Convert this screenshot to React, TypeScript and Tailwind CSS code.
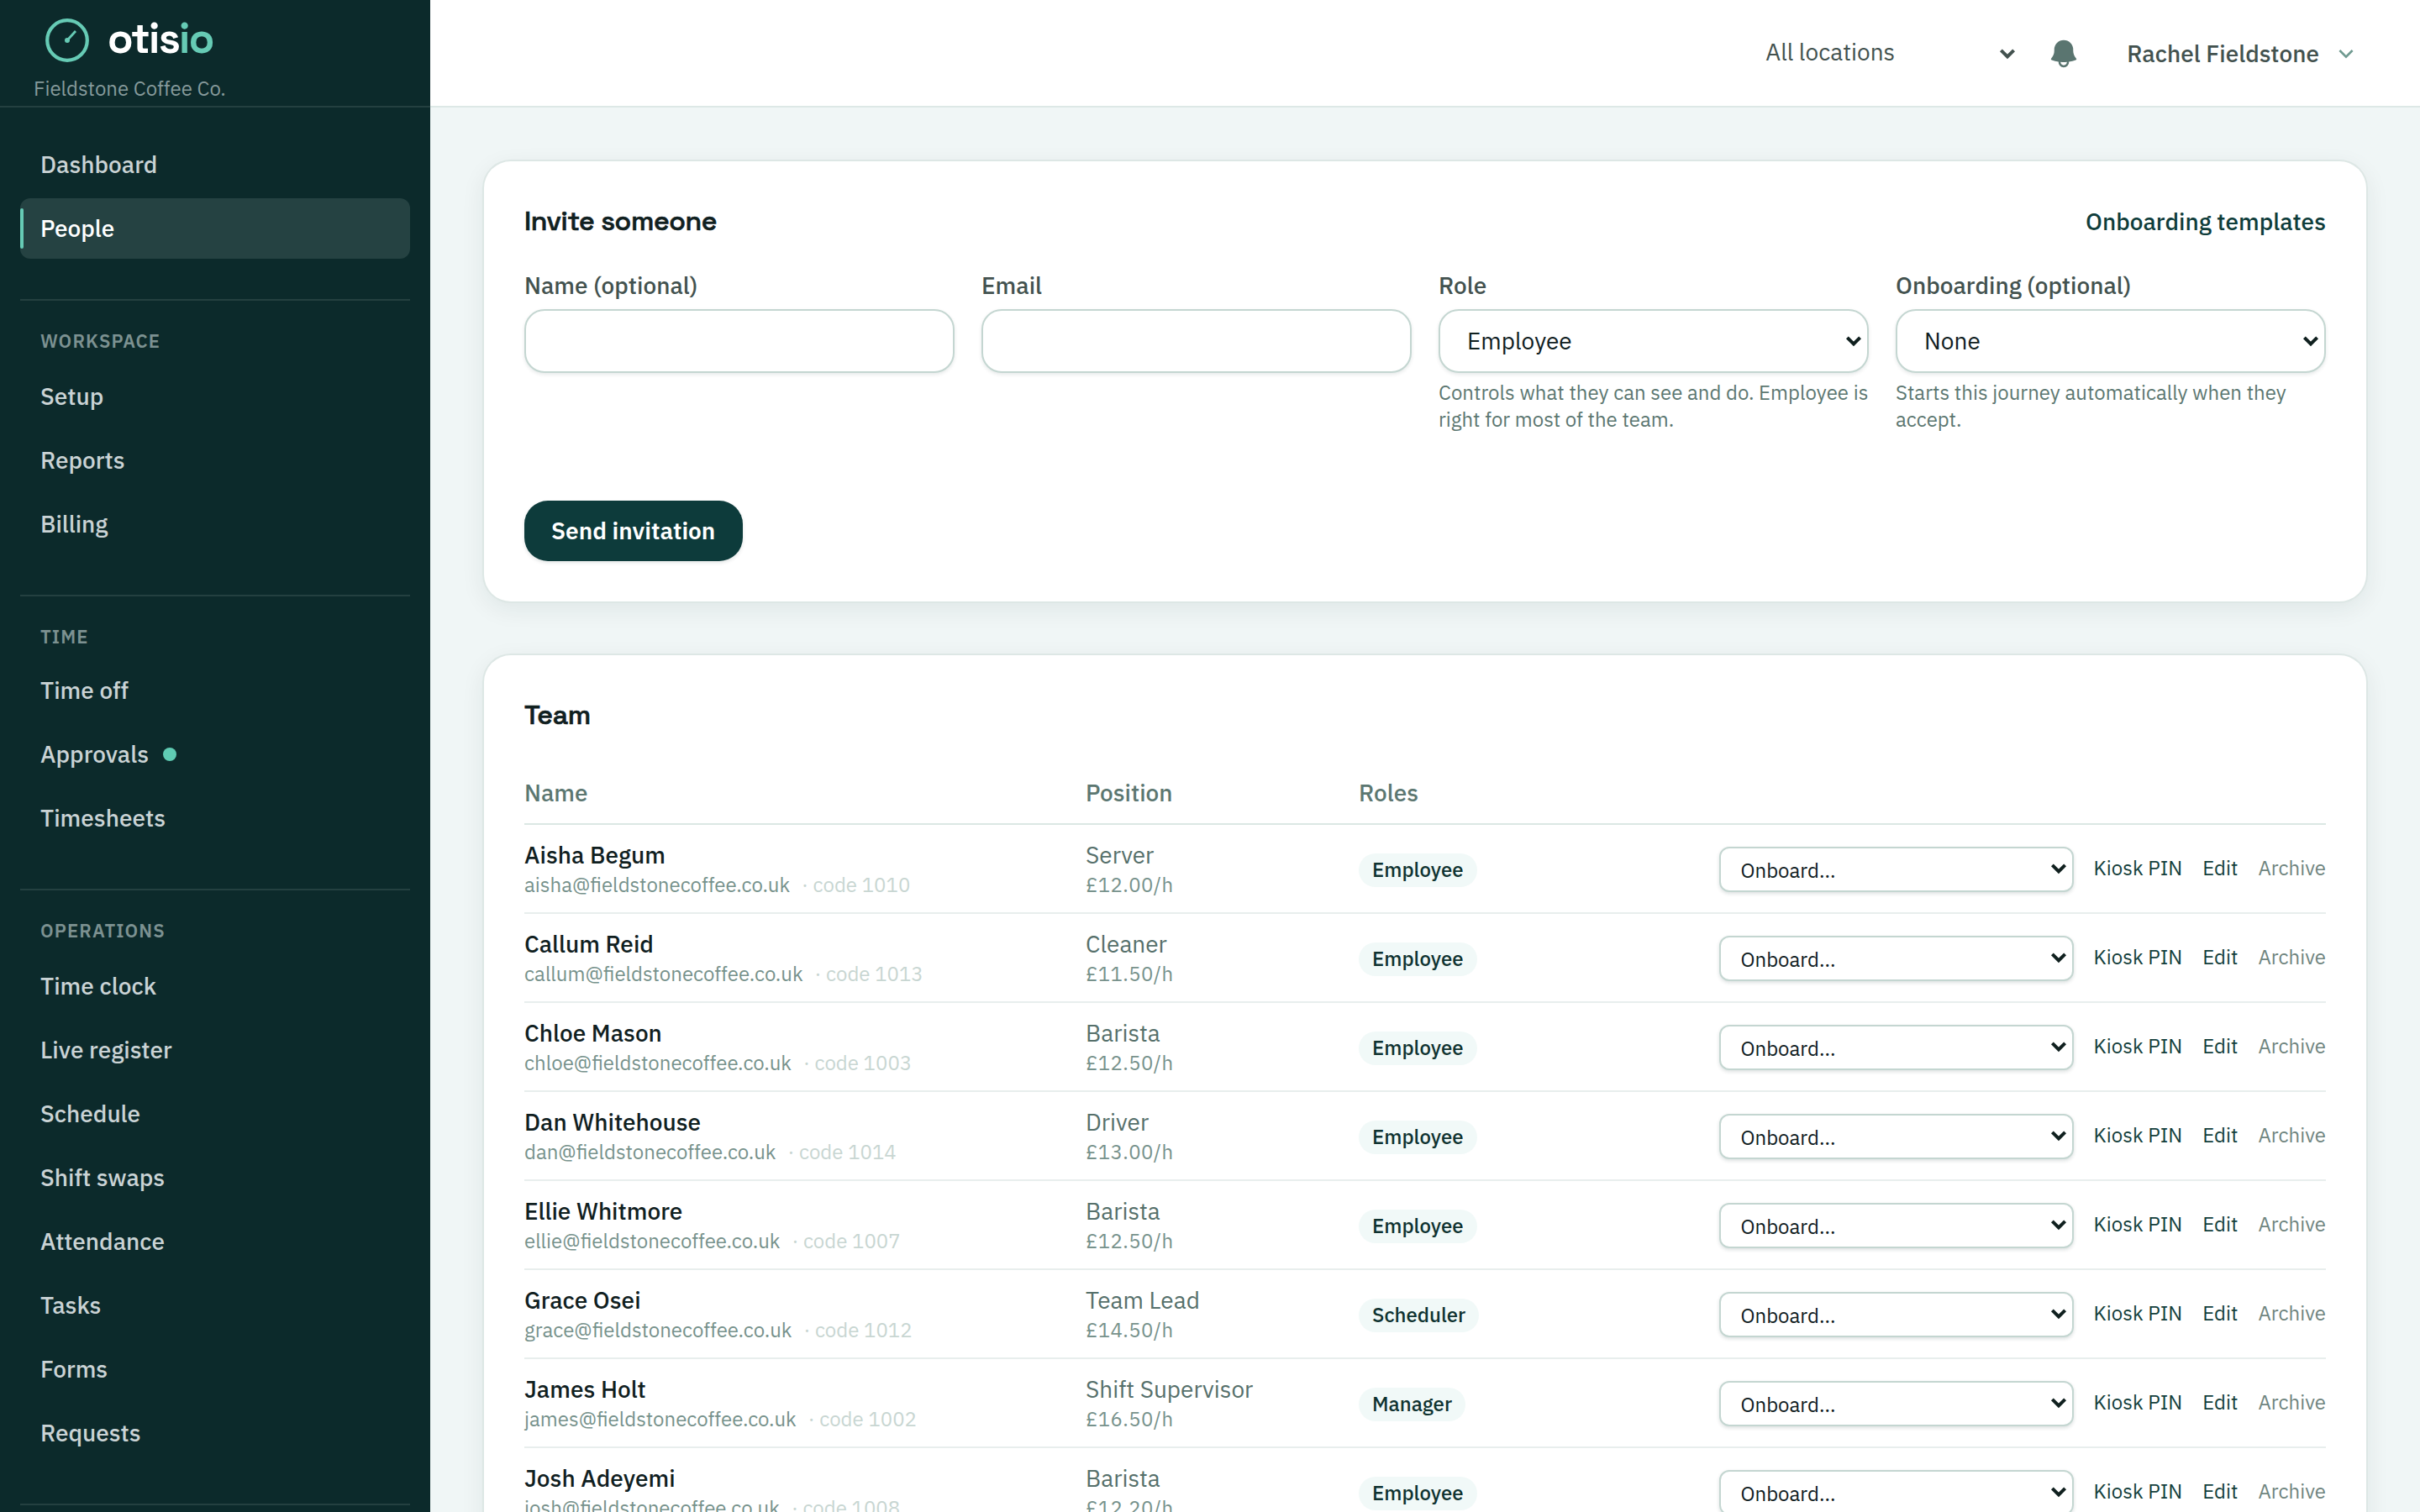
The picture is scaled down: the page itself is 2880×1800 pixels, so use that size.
import clsx from 'clsx';

const sections = [
    {
        title: 'Workspace',
        items: [{ label: 'Setup' }, { label: 'Reports' }, { label: 'Billing' }],
    },
    {
        title: 'Time',
        tight: true,
        items: [{ label: 'Time off' }, { label: 'Approvals', dot: true }, { label: 'Timesheets' }],
    },
    {
        title: 'Operations',
        items: [
            { label: 'Time clock' },
            { label: 'Live register' },
            { label: 'Schedule' },
            { label: 'Shift swaps' },
            { label: 'Attendance' },
            { label: 'Tasks' },
            { label: 'Forms' },
            { label: 'Requests' },
        ],
    },
] as { title: string; tight?: boolean; items: { label: string; dot?: boolean }[] }[];

const team = [
    { name: 'Aisha Begum', email: 'aisha@fieldstonecoffee.co.uk', code: 1010, position: 'Server', rate: '£12.00/h', role: 'Employee' },
    { name: 'Callum Reid', email: 'callum@fieldstonecoffee.co.uk', code: 1013, position: 'Cleaner', rate: '£11.50/h', role: 'Employee' },
    { name: 'Chloe Mason', email: 'chloe@fieldstonecoffee.co.uk', code: 1003, position: 'Barista', rate: '£12.50/h', role: 'Employee' },
    { name: 'Dan Whitehouse', email: 'dan@fieldstonecoffee.co.uk', code: 1014, position: 'Driver', rate: '£13.00/h', role: 'Employee' },
    { name: 'Ellie Whitmore', email: 'ellie@fieldstonecoffee.co.uk', code: 1007, position: 'Barista', rate: '£12.50/h', role: 'Employee' },
    { name: 'Grace Osei', email: 'grace@fieldstonecoffee.co.uk', code: 1012, position: 'Team Lead', rate: '£14.50/h', role: 'Scheduler' },
    { name: 'James Holt', email: 'james@fieldstonecoffee.co.uk', code: 1002, position: 'Shift Supervisor', rate: '£16.50/h', role: 'Manager' },
    { name: 'Josh Adeyemi', email: 'josh@fieldstonecoffee.co.uk', code: 1008, position: 'Barista', rate: '£12.20/h', role: 'Employee' },
];

const SelectArrow = ({ className }: { className?: string }) => (
    <svg viewBox="0 0 20 14" className={clsx('w-5 h-3.5 shrink-0', className)} fill="none" stroke="currentColor" strokeWidth="4">
        <path d="M2.4 2.9 L10 10.5 L17.6 2.9" />
    </svg>
);

const Logo = () => (
    <div className="flex items-center">
        <svg viewBox="0 0 52 52" className="w-[52px] h-[52px]" fill="none" stroke="#66cbb5">
            <circle cx="26" cy="26" r="23.8" strokeWidth="4.2" />
            <path d="M26 26 L36 15" strokeWidth="2.8" />
            <circle cx="26" cy="26" r="3" fill="#66cbb5" stroke="none" />
        </svg>
        <span className="ml-[22px] pb-1 font-['Space_Grotesk',Lato,sans-serif] font-bold text-[50px] leading-[48px] tracking-[-0.035em] text-white">
            otis<span className="text-[#66cbb5]">io</span>
        </span>
    </div>
);

const NavItem = ({ label, dot, active }: { label: string; dot?: boolean; active?: boolean }) => (
    <a
        className={clsx(
            'flex items-center h-[72px] rounded-xl font-medium',
            active ? 'bg-[#254242] text-white' : 'text-[#cad3d5]'
        )}
    >
        <span className={clsx('w-1 h-12 rounded-full mr-5', active && 'bg-[#66cbb5]')} />
        {label}
        {dot && <span className="size-4 rounded-full bg-[#5fcbb3] ml-[17px]" />}
    </a>
);

const Sidebar = () => (
    <aside className="w-[512px] shrink-0 bg-[#0c2a2b]">
        <div className="h-32 border-b-2 border-[#244040] pt-[22px]">
            <div className="pl-[54px]">
                <Logo />
            </div>
            <div className="mt-[15px] pl-10 text-2xl leading-8 text-[#869a9b]">Fieldstone Coffee Co.</div>
        </div>
        <nav className="px-6 pt-8">
            <div className="flex flex-col gap-1">
                <NavItem label="Dashboard" />
                <NavItem label="People" active />
            </div>
            {sections.map((section) => (
                <div key={section.title} className="mt-12 border-t-2 border-[#244040] pt-8">
                    <div className="pl-6 text-[22px] leading-8 font-semibold uppercase tracking-[0.05em] text-[#7c9191]">
                        {section.title}
                    </div>
                    <div className={clsx('flex flex-col gap-1', section.tight ? 'mt-3' : 'mt-3.5')}>
                        {section.items.map((item) => (
                            <NavItem key={item.label} label={item.label} dot={item.dot} />
                        ))}
                    </div>
                </div>
            ))}
            <div className="mt-12 border-t-2 border-[#244040]" />
        </nav>
    </aside>
);

const Topbar = () => (
    <header className="flex items-center justify-end h-32 border-b-2 border-[#dde8e6] bg-white pt-0.5 pr-[78px] text-[#43524f]">
        <div className="flex items-center justify-between w-[298px] pb-1">
            <span>All locations</span>
            <SelectArrow className="mt-1" />
        </div>
        <svg viewBox="0 0 24 24" className="size-10 ml-[37px]" fill="#5a7570">
            <path
                fillRule="evenodd"
                d="M5.25 9a6.75 6.75 0 0 1 13.5 0v.75c0 2.123.8 4.057 2.118 5.52a.75.75 0 0 1-.297 1.206c-1.544.57-3.16.99-4.831 1.243a3.75 3.75 0 1 1-7.48 0 24.585 24.585 0 0 1-4.831-1.244.75.75 0 0 1-.298-1.205A8.217 8.217 0 0 0 5.25 9.75V9Zm4.502 8.9a2.25 2.25 0 1 0 4.496 0 25.057 25.057 0 0 1-4.496 0Z"
                clipRule="evenodd"
            />
        </svg>
        <span className="ml-[55px] font-medium">Rachel Fieldstone</span>
        <svg viewBox="0 0 20 14" className="w-5 h-3.5 ml-[22px]" fill="none" stroke="#6f9a90" strokeWidth="2.6">
            <path d="M2.4 3 L10 10.6 L17.6 3" />
        </svg>
    </header>
);

const Card = ({ children }: { children: React.ReactNode }) => (
    <section className="rounded-[32px] bg-white p-12 ring-2 ring-[#dde7e5] shadow-[0_8px_28px_2px_rgba(13,43,43,0.07)]">
        {children}
    </section>
);

const CardTitle = ({ children }: { children: React.ReactNode }) => (
    <h2 className="h-12 font-['Space_Grotesk',Inter,sans-serif] text-[32px] leading-[46px] font-medium tracking-[-0.012em] [-webkit-text-stroke:0.7px_#10201f]">
        {children}
    </h2>
);

const Field = ({ label, value, hint }: { label: string; value?: string; hint?: string[] }) => (
    <div>
        <div className="leading-10 font-medium text-[#43524f]">{label}</div>
        <div className="mt-2 flex items-center justify-between h-[76px] rounded-3xl border-2 border-[#c4d6d1] bg-white pl-8 pr-1.5 shadow-[0_2px_4px_rgba(13,43,43,0.1)]">
            {value && (
                <>
                    <span>{value}</span>
                    <SelectArrow />
                </>
            )}
        </div>
        {hint && (
            <p className="mt-[7px] text-2xl leading-8 text-[#5c7771]">
                {hint.map((line) => (
                    <span key={line} className="block whitespace-nowrap">{line}</span>
                ))}
            </p>
        )}
    </div>
);

const InviteCard = () => (
    <Card>
        <div className="flex justify-between">
            <CardTitle>Invite someone</CardTitle>
            <a className="leading-[47px] font-medium text-[#0f3d3b]">Onboarding templates</a>
        </div>
        <div className="mt-8 grid grid-cols-4 gap-8">
            <Field label="Name (optional)" />
            <Field label="Email" />
            <Field label="Role" value="Employee" hint={['Controls what they can see and do. Employee is', 'right for most of the team.']} />
            <Field label="Onboarding (optional)" value="None" hint={['Starts this journey automatically when they', 'accept.']} />
        </div>
        <button className="mt-[81px] flex items-center w-[260px] h-[72px] rounded-[28px] bg-[#0d3b3b] px-8 font-semibold whitespace-nowrap text-white shadow-[0_2px_4px_rgba(13,43,43,0.12)]">
            Send invitation
        </button>
    </Card>
);

const TeamCard = () => (
    <Card>
        <CardTitle>Team</CardTitle>
        <div className="mt-12 grid grid-cols-[668px_325px_1fr] border-b-2 border-[#dbe7e4] pb-4 leading-10 font-medium text-[#5c7771]">
            <div>Name</div>
            <div>Position</div>
            <div>Roles</div>
        </div>
        {team.map((person) => (
            <div key={person.code} className="grid grid-cols-[668px_325px_1fr_auto] h-[106px] border-b-2 border-[#e8eeed] pt-4">
                <div>
                    <div className="leading-[39px] font-medium">{person.name}</div>
                    <div className="text-2xl leading-8 text-[#77928c]">
                        {person.email}
                        <span className="ml-3.5 text-[#c8d6d2]">· code {person.code}</span>
                    </div>
                </div>
                <div>
                    <div className="leading-[39px] text-[#56706b]">{person.position}</div>
                    <div className="text-2xl leading-8 tracking-[0.4px] tabular-nums text-[#77928c]">{person.rate}</div>
                </div>
                <div>
                    <span className="mt-[18px] inline-block h-10 rounded-[20px] bg-[#f1f9f8] px-4 text-2xl leading-[38px] font-medium text-[#0f3331]">
                        {person.role}
                    </span>
                </div>
                <div className="flex h-[72px] items-center gap-6 text-2xl text-[#143f3c]">
                    <div className="flex items-center justify-between w-[422px] h-[54px] mt-0.5 rounded-xl border-2 border-[#c4d6d1] bg-white pl-6 pr-1.5 text-[#10201f] shadow-[0_2px_4px_rgba(13,43,43,0.14)]">
                        <span className="pt-px">Onboard...</span>
                        <SelectArrow className="-mt-0.5" />
                    </div>
                    <a className="pb-0.5">Kiosk PIN</a>
                    <a className="pb-0.5">Edit</a>
                    <a className="pb-0.5 text-[#70857f]">Archive</a>
                </div>
            </div>
        ))}
    </Card>
);

const App = () => (
    <div className="flex w-[2880px] h-[1800px] overflow-hidden bg-[#f0f6f6] font-['IBM_Plex_Sans',Roboto,sans-serif] text-[28px] leading-10 text-[#10201f]">
        <Sidebar />
        <div className="flex-1">
            <Topbar />
            <main className="flex flex-col gap-16 p-16">
                <InviteCard />
                <TeamCard />
            </main>
        </div>
    </div>
);

export default App;
